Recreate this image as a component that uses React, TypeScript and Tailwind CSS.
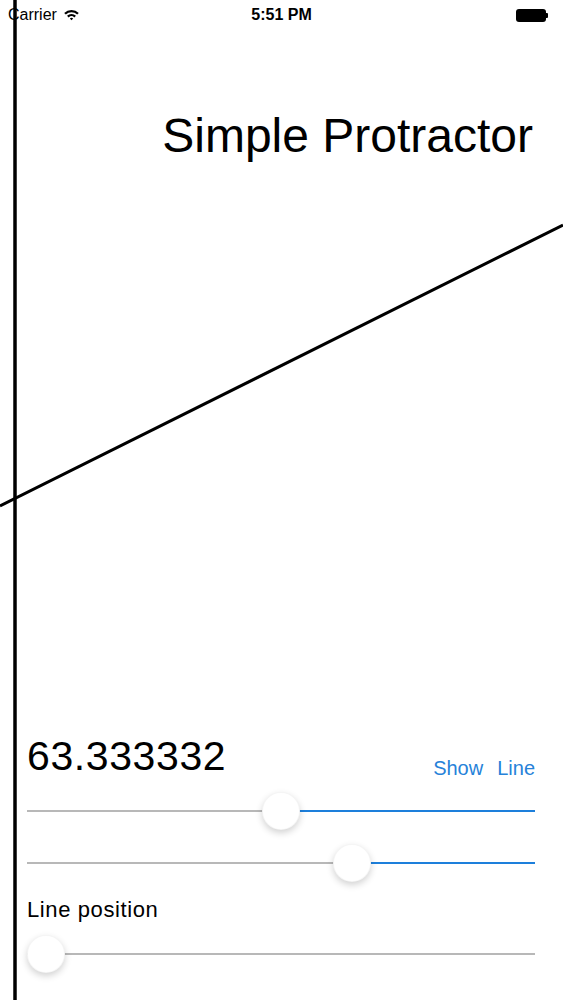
import React from "react";

// ==========================================
// Slider (iOS look: grey on the left, tint on the right)
// ==========================================
const TRACK_W = 508;
const THUMB = 38;

function Slider({ value, tinted = true }: { value: number; tinted?: boolean }) {
    const left = value * (TRACK_W - THUMB);
    const centre = left + THUMB / 2;
    return (
        <div className="relative h-[38px] w-[508px]">
            <div
                className="absolute top-[18px] left-0 h-[2px] bg-[#b8b8b8]"
                style={{ width: centre }}
            />
            <div
                className={`absolute top-[18px] right-0 h-[2px] ${tinted ? "bg-[#1d7fdb]" : "bg-[#b8b8b8]"}`}
                style={{ left: centre }}
            />
            <div
                className="absolute top-0 h-[38px] w-[38px] rounded-full bg-white border border-black/[0.04] shadow-[0_3px_7px_rgba(0,0,0,0.18)]"
                style={{ left }}
            />
        </div>
    );
}

function Wifi() {
    return (
        <svg width="17" height="12" viewBox="0 0 15 11" className="ml-[6px]">
            <path d="M0.8 3.6 A9.5 9.5 0 0 1 14.2 3.6 L12.7 5.1 A7.4 7.4 0 0 0 2.3 5.1 Z" fill="#000" />
            <path d="M3.4 6.2 A5.8 5.8 0 0 1 11.6 6.2 L10.1 7.7 A3.7 3.7 0 0 0 4.9 7.7 Z" fill="#000" />
            <path d="M6 8.8 A2.1 2.1 0 0 1 9 8.8 L7.5 10.4 Z" fill="#000" />
        </svg>
    );
}

export default function App() {
    return (
        <div className="relative w-[563px] h-[1000px] overflow-hidden bg-white text-black font-['Liberation_Sans',Arial,sans-serif]">
            {/* status bar */}
            <div className="flex h-[30px] items-center justify-between px-[8px]">
                <div className="flex w-[120px] items-center text-[16px] leading-[16px]">
                    <span>Carrier</span>
                    <Wifi />
                </div>
                <div className="text-[16px] leading-[16px] font-semibold">5:51 PM</div>
                <div className="flex w-[120px] items-center justify-end pr-[7px]">
                    <div className="h-[13px] w-[30px] rounded-[3px] bg-black" />
                    <div className="h-[5px] w-[2px] rounded-r-[1px] bg-black" />
                </div>
            </div>

            {/* title */}
            <h1 className="mt-[82px] pr-[30px] text-right text-[48px] leading-[48px] font-normal">
                Simple Protractor
            </h1>

            {/* controls */}
            <div className="mt-[576px] pl-[27px] pr-[28px]">
                <div className="flex h-[40px] items-end justify-between">
                    <span className="text-[41px] leading-[40px] tracking-[0.6px]">63.333332</span>
                    <div className="mb-[-2px] flex gap-[14px] text-[20px] leading-[20px] text-[#2682d9]">
                        <button>Show</button>
                        <button>Line</button>
                    </div>
                </div>
                <div className="mt-[16px]">
                    <Slider value={0.501} />
                </div>
                <div className="mt-[14px]">
                    <Slider value={0.65} />
                </div>
                <div className="mt-[16px] text-[22px] leading-[24px] tracking-[0.6px]">Line position</div>
                <div className="mt-[13px]">
                    <Slider value={0} tinted={false} />
                </div>
            </div>

            {/* protractor lines */}
            <svg
                className="pointer-events-none absolute inset-0"
                width="563"
                height="1000"
                viewBox="0 0 563 1000"
            >
                <line x1="15" y1="0" x2="15" y2="1000" stroke="#000" strokeWidth="3.5" />
                <line x1="0" y1="506" x2="563" y2="225" stroke="#000" strokeWidth="3" />
            </svg>
        </div>
    );
}
